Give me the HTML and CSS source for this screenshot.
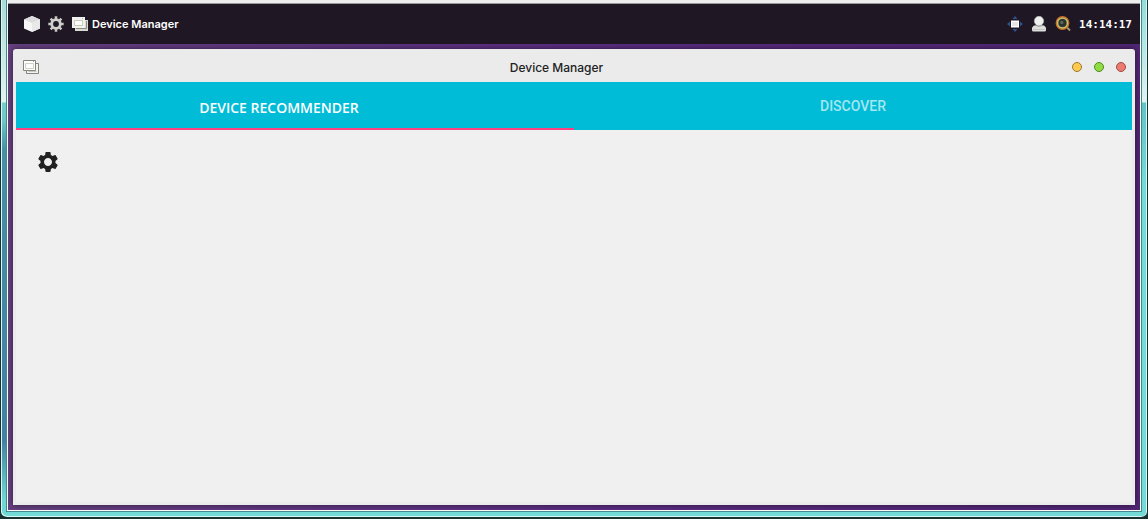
FILE: index.html
```html
<!DOCTYPE html>
<html lang="en">
<head>
<meta charset="utf-8">
<title>Device Manager</title>
<link rel="stylesheet" href="styles.css">
</head>
<body>
<svg class="defs" width="0" height="0" aria-hidden="true">
  <symbol id="windows" viewBox="0 0 16 14">
    <path d="M3.500 3.500h12v10h-12z" fill="#f4f3ef" stroke="#85857f"/>
    <path d="M5.500 11.500h8" stroke="#c9c9bd"/>
    <path d="M.5.5h12v10H.5z" fill="#fff" stroke="#85857f"/>
    <path d="M2.500 3.500h8v5h-8z" fill="#fff" stroke="#d0d0c4"/>
    <path d="M10 1.500h1" stroke="#aaa"/>
  </symbol>
  <symbol id="windows-light" viewBox="0 0 16 14">
    <path d="M3 3h13v11H3z" fill="#d9d9d4"/>
    <path d="M4 11.500h10.500V4" fill="none" stroke="#8b8b84"/>
    <path d="M0 0h13v11H0z" fill="#f1f1ed"/>
    <path d="M2.500 3.500h8v5h-8z" fill="#fff" stroke="#c9c9bd"/>
    <path d="M10 1.500h1" stroke="#aaa"/>
  </symbol>
</svg>
<div class="frame">
  <div class="screen">
    <header class="panel">
      <div class="group">
        <button class="tool" aria-label="Applications">
          <svg width="16" height="16" viewBox="0 0 16 16"><path d="M8 0l8 3.500v9L8 16 0 12.500v-9z" fill="#f7f7f7"/><path d="M8 0l8 3.500L8 7 0 3.500z" fill="#dcdcdc"/><path d="M8 7l8-3.500v9L8 16z" fill="#e8e8e8"/></svg>
        </button>
        <button class="tool" aria-label="Settings">
          <svg width="16" height="16" viewBox="0 0 16 16"><path d="M8 .3v15.400M.3 8h15.400M2.600 2.600l10.800 10.800M13.400 2.600L2.600 13.400" stroke="#c6c6c2" stroke-width="2.600"/><circle cx="8" cy="8" r="4.300" fill="#201824" stroke="#cfcfcb" stroke-width="2.800"/></svg>
        </button>
        <button class="task"><svg width="16" height="14"><use href="#windows-light"/></svg>Device Manager</button>
      </div>
      <div class="group">
        <button class="tool" aria-label="Move">
          <svg width="16" height="16" viewBox="0 0 16 16"><path d="M8 0l2.500 3h-5zM8 16l2.500-3h-5zM0 8l3-2.500v5zM16 8l-3-2.500v5z" fill="#2b528a"/><path d="M4 4.500h8v7H4z" fill="#fff"/><path d="M5 6h6v4H5z" fill="#e6e6e6"/></svg>
        </button>
        <button class="tool" aria-label="User">
          <svg width="16" height="16" viewBox="0 0 16 16"><path d="M3 9.500h10l2 2V14q0 1.500-1.500 1.500h-11Q1 15.500 1 14v-2.500z" fill="#dededb"/><path d="M2 13.500h12" stroke="#c2c2be"/><circle cx="8" cy="5" r="4.700" fill="#f0f0ee" stroke="#b5b5b0" stroke-width=".6"/><path d="M4.500 9.500q3.500 2 7 0" fill="none" stroke="#aaa"/></svg>
        </button>
        <button class="tool" aria-label="Search">
          <svg width="16" height="16" viewBox="0 0 16 16"><path d="M11.500 11l3.500 3.500" stroke="#a79a70" stroke-width="1.800"/><circle cx="7.500" cy="7" r="6.200" fill="#80927b" stroke="#cf6d24" stroke-width="1.400"/><circle cx="7.500" cy="7" r="5" fill="none" stroke="#cfc865" stroke-width="1.100"/><circle cx="7.500" cy="7" r="4" fill="#29322b"/><circle cx="6.800" cy="6.500" r="1.700" fill="#5a6557"/></svg>
        </button>
        <time class="clock">14:14:17</time>
      </div>
    </header>
    <div class="desktop">
      <main class="window">
        <div class="titlebar">
          <svg width="16" height="14" aria-hidden="true"><use href="#windows"/></svg>
          <h1 class="title">Device Manager</h1>
          <div class="controls">
            <button class="dot minimize" aria-label="Minimize"></button>
            <button class="dot maximize" aria-label="Maximize"></button>
            <button class="dot close" aria-label="Close"></button>
          </div>
        </div>
        <div class="tabs" role="tablist">
          <button class="tab active" role="tab" aria-selected="true">DEVICE RECOMMENDER</button>
          <button class="tab" role="tab" aria-selected="false">DISCOVER</button>
        </div>
        <section class="content" role="tabpanel">
          <button class="tool" aria-label="Options">
            <svg width="24" height="24" viewBox="0 0 24 24"><path fill="#212121" d="M19.430 12.980c.04-.32.07-.64.07-.98s-.03-.66-.07-.98l2.110-1.650c.19-.15.24-.42.12-.64l-2-3.460c-.12-.22-.39-.3-.61-.22l-2.490 1c-.52-.4-1.080-.73-1.690-.98l-.38-2.650C14.460 2.180 14.250 2 14 2h-4c-.25 0-.46.18-.49.42l-.38 2.650c-.61.25-1.170.59-1.690.98l-2.490-1c-.23-.09-.49 0-.61.22l-2 3.460c-.13.22-.07.49.12.64l2.110 1.650c-.04.32-.07.65-.07.98s.03.66.07.98l-2.110 1.650c-.19.15-.24.42-.12.64l2 3.460c.12.22.39.3.61.22l2.490-1c.52.4 1.080.73 1.690.98l.38 2.650c.03.24.24.42.49.42h4c.25 0 .46-.18.49-.42l.38-2.650c.61-.25 1.170-.59 1.690-.98l2.490 1c.23.09.49 0 .61-.22l2-3.460c.12-.22.07-.49-.12-.64zM12 16c-2.200 0-4-1.800-4-4s1.800-4 4-4 4 1.800 4 4-1.800 4-4 4z"/></svg>
          </button>
        </section>
      </main>
    </div>
  </div>
</div>
</body>
</html>
```
FILE: styles.css
```css
* { box-sizing: border-box; }
body {
  margin: 0;
  background: #18302f;
  font-family: Inter, "Open Sans", sans-serif;
  font-size: 12px;
}
button {
  margin: 0;
  padding: 0;
  border: 0;
  background: none;
  font: inherit;
  color: inherit;
}
svg { display: block; }
.defs { position: absolute; }
.frame {
  display: flex;
  min-height: 100vh;
  padding: 0 6px;
  padding-bottom: 6px;
  border: solid #18302f;
  border-width: 0 1px 2px;
  border-radius: 0 0 7px 7px;
  background:
    linear-gradient(#abdcda 0, #e2f3f1 102px, #72cfcb 103px, #70c7c8 120px, #4690a8 150px, #4381a2 440px, #6fd9d5 500px) left / 7px 100% no-repeat,
    linear-gradient(#91dcda 0, #e2f3f1 102px, #61c4c4 103px, #72dad7 180px) right / 7px 100% no-repeat,
    #72dad7;
  box-shadow: inset 1px -1px #d9f7f5, inset -1px 0 #d9f7f5;
}
.screen {
  flex: 1;
  display: flex;
  flex-direction: column;
  border: 1px solid #fff;
  border-top: 3px solid #eee;
  box-shadow: 0 0 0 1px #448b91;
}
.panel {
  display: flex;
  justify-content: space-between;
  height: 41px;
  padding: 0 8px 0 16px;
  border-top: 1px solid #999;
  background: #1f1824;
  color: #fff;
}
.group { display: flex; align-items: center; gap: 8px; }
.task {
  display: flex;
  align-items: center;
  gap: 4px;
  font-size: 11px;
  font-weight: 600;
}
.clock { font: bold 11px "DejaVu Sans Mono", monospace; }
.desktop {
  flex: 1;
  display: flex;
  padding: 5px;
  background: linear-gradient(90deg, #66407f, #5b2d82 50%, #512674);
}
.window {
  flex: 1;
  padding: 0 3px 3px;
  display: flex;
  flex-direction: column;
  border-radius: 3px 3px 0 0;
  background: #ebebeb;
  box-shadow: 0 0 6px #0008;
}
.titlebar {
  display: flex;
  align-items: center;
  height: 33px;
  padding: 3px 6px 0 7px;
}
.title {
  flex: 1;
  margin: 0;
  padding-left: 2px;
  text-align: center;
  font-size: 12px;
  font-weight: 500;
  color: #222;
}
.controls { display: flex; gap: 12px; }
.dot { width: 10px; height: 10px; border: 1px solid; border-radius: 50%; }
.minimize { background: #ffca4f; border-color: #9b7a2c; }
.maximize { background: #8fdd42; border-color: #548b22; }
.close { background: #ec7c70; border-color: #9a4e46; }
.tabs {
  display: grid;
  grid-template-columns: 1fr 1fr;
  height: 48px;
  background: #00bcd7;
}
.tab {
  padding-top: 2px;
  font: 500 14px Roboto, sans-serif;
  color: #a6e6f0;
  border-bottom: 2px solid transparent;
}
.active {
  padding: 5px 32px 0 0;
  color: #fff;
  font: 600 14px "Open Sans", sans-serif;
  border-bottom-color: #ff4081;
}
.content { flex: 1; padding: 20px; background: #f0f0f0; }
```
